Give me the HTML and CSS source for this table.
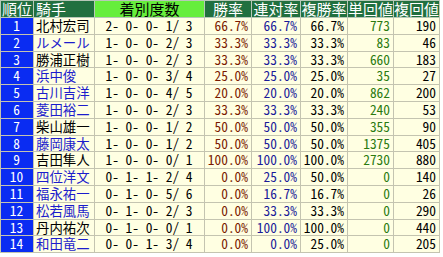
FILE: index.html
```html
<!DOCTYPE html>
<html lang="ja">
<head>
<meta charset="utf-8">
<link rel="stylesheet" href="styles.css">
</head>
<body>
<table class="stats">
<colgroup>
<col class="c-rank"><col class="c-name"><col class="c-rec"><col class="c-p"><col class="c-p2"><col class="c-p"><col class="c-v"><col class="c-v">
</colgroup>
<thead>
<tr>
<th class="hd">順位</th><th class="hd left">騎手</th><th class="hl">着別度数</th><th class="hd">勝率</th><th class="hd">連対率</th><th class="hd">複勝率</th><th class="hd">単回値</th><th class="hd">複回値</th>
</tr>
</thead>
<tbody>
<tr><td class="rank">1</td><td class="name">北村宏司</td><td class="rec">2- 0- 0- 1/ 3</td><td class="win">66.7%</td><td class="ren">66.7%</td><td class="fuku">66.7%</td><td class="tan">773</td><td class="fk">190</td></tr>
<tr><td class="rank">2</td><td class="name link">ルメール</td><td class="rec">1- 0- 0- 2/ 3</td><td class="win">33.3%</td><td class="ren">33.3%</td><td class="fuku">33.3%</td><td class="tan">83</td><td class="fk">46</td></tr>
<tr><td class="rank">3</td><td class="name">勝浦正樹</td><td class="rec">1- 0- 0- 2/ 3</td><td class="win">33.3%</td><td class="ren">33.3%</td><td class="fuku">33.3%</td><td class="tan">660</td><td class="fk">183</td></tr>
<tr><td class="rank">4</td><td class="name link">浜中俊</td><td class="rec">1- 0- 0- 3/ 4</td><td class="win">25.0%</td><td class="ren">25.0%</td><td class="fuku">25.0%</td><td class="tan">35</td><td class="fk">27</td></tr>
<tr><td class="rank">5</td><td class="name link">古川吉洋</td><td class="rec">1- 0- 0- 4/ 5</td><td class="win">20.0%</td><td class="ren">20.0%</td><td class="fuku">20.0%</td><td class="tan">862</td><td class="fk">200</td></tr>
<tr><td class="rank">6</td><td class="name link">菱田裕二</td><td class="rec">1- 0- 0- 2/ 3</td><td class="win">33.3%</td><td class="ren">33.3%</td><td class="fuku">33.3%</td><td class="tan">240</td><td class="fk">53</td></tr>
<tr><td class="rank">7</td><td class="name">柴山雄一</td><td class="rec">1- 0- 0- 1/ 2</td><td class="win">50.0%</td><td class="ren">50.0%</td><td class="fuku">50.0%</td><td class="tan">355</td><td class="fk">90</td></tr>
<tr><td class="rank">8</td><td class="name link">藤岡康太</td><td class="rec">1- 0- 0- 1/ 2</td><td class="win">50.0%</td><td class="ren">50.0%</td><td class="fuku">50.0%</td><td class="tan">1375</td><td class="fk">405</td></tr>
<tr><td class="rank">9</td><td class="name">吉田隼人</td><td class="rec">1- 0- 0- 0/ 1</td><td class="win">100.0%</td><td class="ren">100.0%</td><td class="fuku">100.0%</td><td class="tan">2730</td><td class="fk">880</td></tr>
<tr><td class="rank">10</td><td class="name link">四位洋文</td><td class="rec">0- 1- 1- 2/ 4</td><td class="win">0.0%</td><td class="ren">25.0%</td><td class="fuku">50.0%</td><td class="tan">0</td><td class="fk">140</td></tr>
<tr><td class="rank">11</td><td class="name link">福永祐一</td><td class="rec">0- 1- 0- 5/ 6</td><td class="win">0.0%</td><td class="ren">16.7%</td><td class="fuku">16.7%</td><td class="tan">0</td><td class="fk">26</td></tr>
<tr><td class="rank">12</td><td class="name link">松若風馬</td><td class="rec">0- 1- 0- 2/ 3</td><td class="win">0.0%</td><td class="ren">33.3%</td><td class="fuku">33.3%</td><td class="tan">0</td><td class="fk">290</td></tr>
<tr><td class="rank">13</td><td class="name">丹内祐次</td><td class="rec">0- 1- 0- 0/ 1</td><td class="win">0.0%</td><td class="ren">100.0%</td><td class="fuku">100.0%</td><td class="tan">0</td><td class="fk">440</td></tr>
<tr><td class="rank">14</td><td class="name link">和田竜二</td><td class="rec">0- 0- 1- 3/ 4</td><td class="win">0.0%</td><td class="ren">0.0%</td><td class="fuku">25.0%</td><td class="tan">0</td><td class="fk">205</td></tr>
</tbody>
</table>
</body>
</html>
```

FILE: styles.css
```css
html, body {
  margin: 0;
  padding: 0;
  background: #ffffff;
}

.stats {
  border-collapse: collapse;
  table-layout: fixed;
  width: 440px;
  font-family: "Noto Sans Mono CJK JP", "Noto Sans CJK JP", monospace;
  font-size: 13.4px;
  color: #000000;
}

.c-rank { width: 33px; }
.c-name { width: 61px; }
.c-rec { width: 110px; }
.c-p { width: 47px; }
.c-p2 { width: 49px; }
.c-v { width: 46px; }

.stats th,
.stats td {
  border: 1px solid #c4c4b0;
  padding: 0 3px 0 2px;
  white-space: pre;
  line-height: 15.8px;
}

.stats thead tr {
  height: 17px;
}

.stats tbody tr {
  height: 16.8px;
}

.stats th {
  font-weight: normal;
  font-size: 15px;
  text-align: center;
  padding: 0;
  line-height: 16px;
  border-color: #b8c8b8;
}

.stats th.left {
  text-align: left;
  padding-left: 2px;
}

.hd {
  background: #21703f;
  color: #ffffff;
}

.hl {
  background: #66ee3c;
  color: #000000;
}

.stats td {
  background: #ffffe2;
}

.stats td.rank {
  background: #0a2cf2;
  color: #ffffff;
  text-align: center;
}

.name {
  text-align: left;
}

.name.link {
  color: #1c1ccc;
}

.rec {
  text-align: center;
}

.win {
  text-align: right;
  color: #7a1a00;
}

.ren {
  text-align: right;
  color: #1a1a99;
}

.fuku {
  text-align: right;
}

.tan {
  text-align: right;
  color: #2a7a10;
}

.fk {
  text-align: right;
}
```
